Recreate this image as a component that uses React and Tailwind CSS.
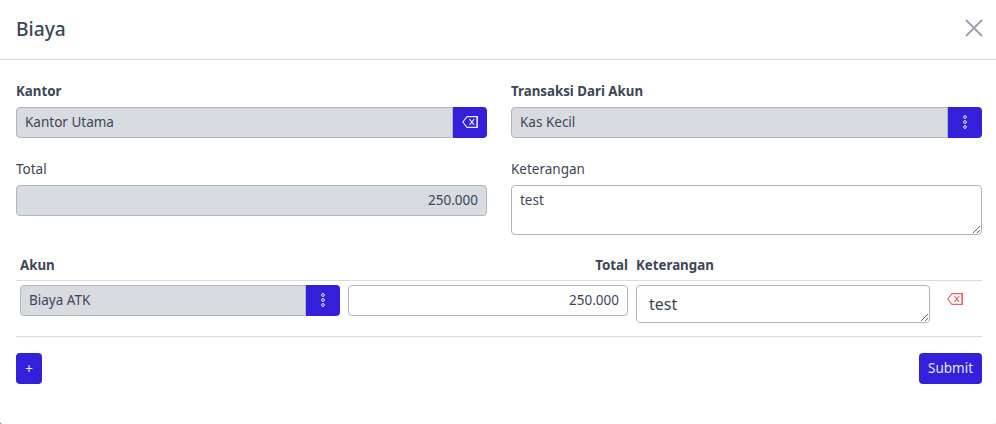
import React from "react";
import { X } from "lucide-react";

const BackspaceIcon = ({ className }) => (
  <svg viewBox="0 0 16 12" fill="none" stroke="currentColor" className={className}>
    <path d="M5 .6h10.3v10.8H5L.8 6z" strokeWidth="1.2" strokeLinejoin="round" />
    <path d="M7.5 3.2l4.7 5.6M12.2 3.2L7.5 8.8" strokeWidth="1.2" />
    <path d="M15.2 .5v11" strokeWidth="1.5" />
  </svg>
);

const DotsIcon = () => (
  <svg viewBox="0 0 4 14" width="4" height="14" fill="none" stroke="currentColor" strokeWidth="1" className="text-indigo-100">
    <circle cx="2" cy="2" r="1.4" />
    <circle cx="2" cy="7" r="1.4" />
    <circle cx="2" cy="12" r="1.4" />
  </svg>
);

const LookupInput = ({ value, children }) => (
  <div className="flex h-[31px]">
    <input
      readOnly
      value={value}
      className="min-w-0 flex-1 rounded-l border border-[#b0b5c0] bg-[#d8dbe0] px-2 text-[13.5px] text-[#3c4657] outline-none"
    />
    <button className="flex w-[34px] items-center justify-center rounded-r bg-[#341fdb] pb-[2px] text-indigo-100">
      {children}
    </button>
  </div>
);

export default function App() {
  return (
    <div className="h-[424px] overflow-hidden bg-[#8a8d94] font-['Noto_Sans',sans-serif] text-[#3c4657]">
      <div className="h-full rounded-bl-[3px] rounded-br-[1px] bg-white">
        <div className="flex h-[60px] items-center justify-between border-b border-[#d8dbe0] pl-4 pr-[7px]">
          <h5 className="pb-px text-[19.2px] font-medium">Biaya</h5>
          <X size={30} strokeWidth={1.6} className="mb-1 text-[#9ca3af]" />
        </div>

        <div className="pl-4 pr-[14px] pt-[21px]">
          <div className="grid grid-cols-2 gap-x-6">
            <div>
              <label className="mb-[6px] block h-[20px] pt-px text-[13.3px] font-bold leading-[19px]">Kantor</label>
              <LookupInput value="Kantor Utama">
                <BackspaceIcon className="h-3 w-4" />
              </LookupInput>
            </div>
            <div>
              <label className="mb-[6px] block h-[20px] pt-px text-[13.3px] font-bold leading-[19px]">Transaksi Dari Akun</label>
              <LookupInput value="Kas Kecil">
                <DotsIcon />
              </LookupInput>
            </div>
            <div className="mt-[21px]">
              <label className="mb-[6px] block h-[20px] pt-px text-[13.5px] leading-[19px]">Total</label>
              <input
                readOnly
                value="250.000"
                className="block h-[31px] w-full rounded border border-[#b0b5c0] bg-[#d8dbe0] px-2 pb-[2px] text-right text-[13.5px] text-[#3c4657] outline-none"
              />
            </div>
            <div className="mt-[21px]">
              <label className="mb-[6px] block h-[20px] pt-px text-[13.5px] leading-[19px]">Keterangan</label>
              <textarea
                readOnly
                defaultValue="test"
                className="block h-[50px] w-full rounded border border-[#b0b5c0] px-2 py-1 text-[13.5px] text-[#3c4657] outline-none"
              />
            </div>
          </div>

          <div className="mt-[21px] grid grid-cols-[320px_280px_294px_1fr] gap-x-2 border-b border-[#d8dbe0] px-1 pb-[5px] text-[13.3px] font-bold leading-[19px]">
            <div>Akun</div>
            <div className="text-right">Total</div>
            <div>Keterangan</div>
            <div></div>
          </div>

          <div className="grid grid-cols-[320px_280px_294px_1fr] gap-x-2 border-b border-[#d8dbe0] px-1 pb-[13px] pt-1">
            <LookupInput value="Biaya ATK">
              <DotsIcon />
            </LookupInput>
            <input
              readOnly
              value="250.000"
              className="block h-[31px] w-full rounded border border-[#b0b5c0] px-2 pb-[2px] text-right text-[13.5px] text-[#3c4657] outline-none"
            />
            <textarea
              readOnly
              defaultValue="test"
              className="block h-[38px] w-full rounded border border-[#b0b5c0] px-3 py-[6px] text-[16px] leading-6 text-[#3c4657] outline-none"
            />
            <div className="pl-[9px] pt-2">
              <BackspaceIcon className="h-3 w-4 text-[#e8636b]" />
            </div>
          </div>

          <div className="mt-4 flex justify-between">
            <button className="h-[31px] w-[26px] rounded bg-[#341fdb] text-[14px] text-indigo-100">+</button>
            <button className="h-[31px] w-[63px] rounded bg-[#341fdb] text-[13.5px] text-indigo-100">Submit</button>
          </div>
        </div>
      </div>
    </div>
  );
}
